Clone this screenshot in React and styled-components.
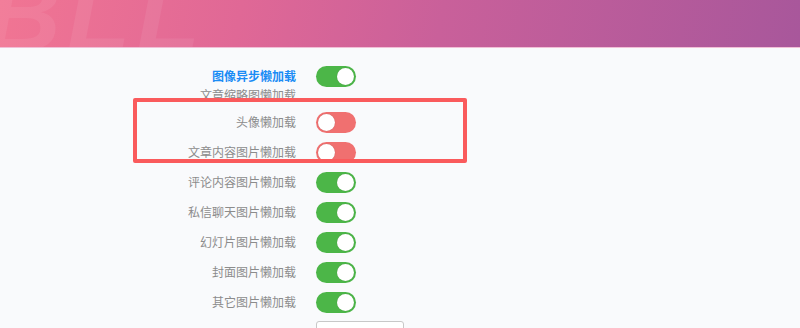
import React from "react";
import styled, { createGlobalStyle } from "styled-components";

const Global = createGlobalStyle`
  html, body { margin: 0; padding: 0; }
  body {
    background: #f9fafc;
    font-family: "Noto Sans CJK SC", "Noto Sans", sans-serif;
    width: 800px;
    height: 328px;
    overflow: hidden;
  }
`;

const Page = styled.div`
  width: 800px;
  height: 328px;
  overflow: hidden;
  background: #f9fafc;
`;

const Header = styled.div`
  position: relative;
  height: 47px;
  overflow: hidden;
  background: linear-gradient(100deg, #f17593 0%, #e06896 30%, #c9609a 55%, #a8579b 100%);
  border-bottom: 1px solid #f1bfd6;
`;

const Watermark = styled.div`
  position: absolute;
  left: -14px;
  top: -38px;
  font-family: "Liberation Sans", sans-serif;
  font-size: 104px;
  font-weight: 900;
  font-style: italic;
  letter-spacing: 6px;
  color: rgba(255, 255, 255, 0.07);
  line-height: 1;
  user-select: none;
`;

const Body = styled.div`
  position: relative;
  padding-top: 13px;
`;

const Row = styled.div`
  display: flex;
  align-items: center;
  height: ${(p) => p.$h || 30}px;
  margin-top: ${(p) => p.$mt || 0}px;
`;

const Label = styled.div`
  width: 296px;
  text-align: right;
  font-size: 12px;
  line-height: 16px;
  color: ${(p) => (p.$active ? "#1a8cf5" : "#8c8c8c")};
  font-weight: ${(p) => (p.$active ? 700 : 400)};
  white-space: nowrap;
`;

const Toggle = styled.div`
  margin-left: 20px;
  width: 40px;
  height: 21px;
  border-radius: 11px;
  box-sizing: border-box;
  background: ${(p) => (p.$on ? "#4cb648" : "#f07070")};
  position: relative;
  flex: none;
`;

const Knob = styled.div`
  position: absolute;
  top: 2px;
  ${(p) => (p.$on ? "right: 2px;" : "left: 2px;")}
  width: 17px;
  height: 17px;
  border-radius: 50%;
  background: #ffffff;
  box-shadow: 0 0 1px rgba(0, 0, 0, 0.25);
`;

const Highlight = styled.div`
  position: absolute;
  left: 133px;
  top: 50px;
  width: 334px;
  height: 65px;
  box-sizing: border-box;
  border: 4px solid #fa5a5c;
  border-radius: 2px;
  pointer-events: none;
`;

const Input = styled.div`
  margin-left: 316px;
  margin-top: 4px;
  width: 88px;
  height: 24px;
  box-sizing: border-box;
  border: 1px solid #c8c8c8;
  border-radius: 3px;
  background: #fff;
`;

const Switch = ({ on }) => (
  <Toggle $on={on}>
    <Knob $on={on} />
  </Toggle>
);

const rows = [
  { label: "头像懒加载", on: false },
  { label: "文章内容图片懒加载", on: false },
  { label: "评论内容图片懒加载", on: true },
  { label: "私信聊天图片懒加载", on: true },
  { label: "幻灯片图片懒加载", on: true },
  { label: "封面图片懒加载", on: true },
  { label: "其它图片懒加载", on: true },
];

export default function App() {
  return (
    <Page>
      <Global />
      <Header>
        <Watermark>BLL</Watermark>
      </Header>
      <Body>
        <Row>
          <Label $active>图像异步懒加载</Label>
          <Switch on />
        </Row>
        <Row $h={16} $mt={-4}>
          <Label>文章缩略图懒加载</Label>
        </Row>
        <Row $mt={4}>
          <Label>{rows[0].label}</Label>
          <Switch on={rows[0].on} />
        </Row>
        {rows.slice(1).map((r) => (
          <Row key={r.label}>
            <Label>{r.label}</Label>
            <Switch on={r.on} />
          </Row>
        ))}
        <Input />
        <Highlight />
      </Body>
    </Page>
  );
}
